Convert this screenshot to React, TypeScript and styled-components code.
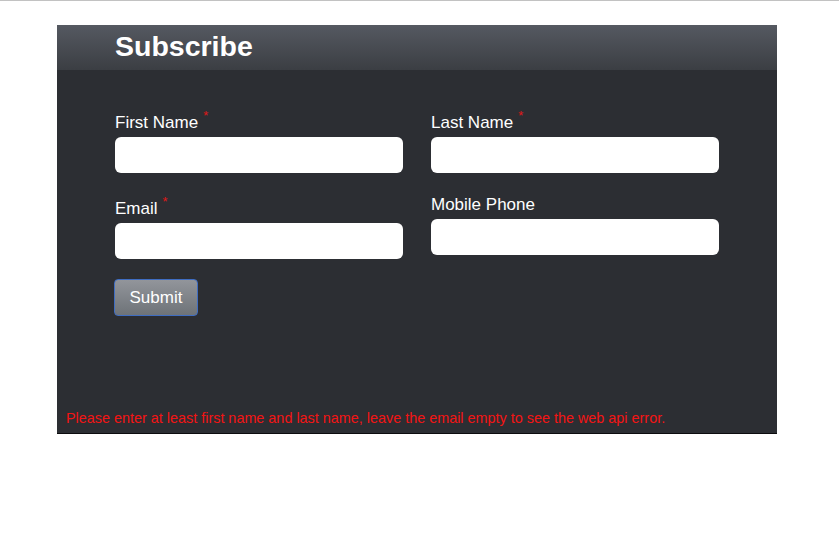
import styled, { createGlobalStyle } from "styled-components";

const GlobalStyle = createGlobalStyle`
  body {
    margin: 0;
    background: #ffffff;
    font-family: "Liberation Sans", Arial, sans-serif;
  }
`;

const Page = styled.div`
  border-top: 1px solid #c2c2c2;
  padding: 24px 0 0 57px;
`;

const Card = styled.section`
  width: 720px;
  background-color: #2c2e33;
  border-bottom: 1px solid #0c0c0e;
`;

const Header = styled.header`
  height: 45px;
  padding-left: 58px;
  background: linear-gradient(to bottom, #555961 0%, #3b3e43 100%);
`;

const Title = styled.h1`
  margin: 0;
  font-size: 28.5px;
  line-height: 43px;
  font-weight: 700;
  color: #ffffff;
`;

const Body = styled.div`
  height: 363px;
  display: flex;
  flex-direction: column;
`;

const Form = styled.form`
  padding: 39px 58px 0;
`;

const FieldGrid = styled.div`
  display: grid;
  grid-template-columns: 288px 288px;
  column-gap: 28px;
  row-gap: 22px;
  align-items: start;
`;

const Field = styled.div`
  display: flex;
  flex-direction: column;
`;

const Label = styled.label`
  display: block;
  margin-bottom: 4px;
  font-size: 17px;
  color: #ffffff;
`;

const Required = styled.span`
  margin-left: 5px;
  font-size: 13px;
  line-height: 1;
  vertical-align: 8px;
  color: #e01818;
`;

const Input = styled.input`
  box-sizing: border-box;
  width: 100%;
  height: 36px;
  padding: 0 10px;
  border: none;
  border-radius: 6px;
  background: #ffffff;
  font-family: inherit;
  font-size: 16px;
  outline: none;
`;

const SubmitButton = styled.button`
  margin-top: 20px;
  margin-left: -1px;
  width: 84px;
  height: 37px;
  border: 1px solid #3f6dc2;
  border-radius: 4px;
  background: linear-gradient(to bottom, #92959b 0%, #6e7378 100%);
  color: #ffffff;
  font-family: inherit;
  font-size: 17px;
  cursor: pointer;
`;

const ErrorText = styled.p`
  margin: auto 0 0;
  padding: 0 0 7px 9px;
  font-size: 14.4px;
  color: #f41414;
`;

interface TextFieldProps {
  id: string;
  label: string;
  required?: boolean;
  type?: string;
}

const TextField = ({ id, label, required, type = "text" }: TextFieldProps) => (
  <Field>
    <Label htmlFor={id}>
      {label}
      {required && <Required>*</Required>}
    </Label>
    <Input id={id} type={type} />
  </Field>
);

export default function App() {
  return (
    <>
      <GlobalStyle />
      <Page>
        <Card>
          <Header>
            <Title>Subscribe</Title>
          </Header>
          <Body>
            <Form onSubmit={(e) => e.preventDefault()}>
              <FieldGrid>
                <TextField id="firstName" label="First Name" required />
                <TextField id="lastName" label="Last Name" required />
                <TextField id="email" label="Email" type="email" required />
                <TextField id="mobile" label="Mobile Phone" type="tel" />
              </FieldGrid>
              <SubmitButton type="submit">Submit</SubmitButton>
            </Form>
            <ErrorText>
              Please enter at least first name and last name, leave the email
              empty to see the web api error.
            </ErrorText>
          </Body>
        </Card>
      </Page>
    </>
  );
}
